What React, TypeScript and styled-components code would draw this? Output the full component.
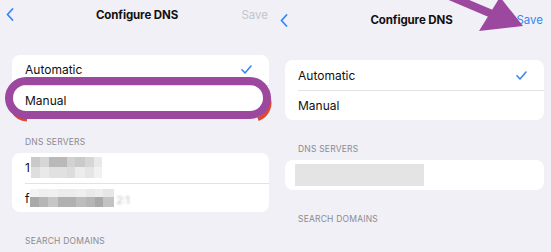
import React from 'react';
import styled, {createGlobalStyle} from 'styled-components';

const Blue = '#3a87f2';
const Purple = '#9d489f';

const GlobalStyle = createGlobalStyle`
    body {
        margin: 0;
        background: #f1f0f6;
        font-family: Inter, "Liberation Sans", Arial, sans-serif;
        -webkit-font-smoothing: antialiased;
    }
`;

const Page = styled.div`
    position: relative;
    display: flex;
    width: 551px;
    height: 252px;
    overflow: hidden;
    background: #f1f0f6;
`;

const Panel = styled.div<{$width: number; $top: number; $left: number}>`
    box-sizing: border-box;
    width: ${p => p.$width}px;
    padding: ${p => p.$top}px 7px 0 ${p => p.$left}px;
    display: flex;
    flex-direction: column;
`;

const NavBar = styled.div<{$pad: number}>`
    height: 30px;
    margin-left: ${p => p.$pad - 6}px;
    margin-right: -6px;
    padding-right: 7px;
    display: grid;
    grid-template-columns: 1fr auto 1fr;
    align-items: center;
`;

const Title = styled.div`
    font-size: 11.5px;
    font-weight: 700;
    color: #111;
    letter-spacing: -0.1px;
`;

const SaveButton = styled.div<{$active?: boolean}>`
    justify-self: end;
    font-size: 11.5px;
    color: ${p => p.$active ? Blue : '#c5c5c8'};
`;

const Card = styled.div<{$mt: number}>`
    margin-top: ${p => p.$mt}px;
    background: #fff;
    border-radius: 8px;
    overflow: hidden;
`;

const Row = styled.div`
    box-sizing: border-box;
    height: 30px;
    margin-left: 13px;
    padding-right: 17px;
    display: flex;
    align-items: center;
    justify-content: space-between;
    font-size: 12px;
    color: #111;

    & + & {
        border-top: 1px solid #e2e2e5;
    }
`;

const Label = styled.div<{$mt: number}>`
    margin: ${p => p.$mt}px 0 6px 13px;
    font-size: 8.5px;
    line-height: 10px;
    letter-spacing: 0.2px;
    color: #8b8b8f;
`;

const Masked = styled.div`
    display: flex;
    align-items: center;
`;

const Mosaic = styled.div`
    display: flex;
    flex-direction: column;
    margin-left: 1px;
`;

const MosaicLine = styled.div<{$h: number}>`
    display: flex;
    height: ${p => p.$h}px;
`;

const Cell = styled.div<{$w: number; $c: string}>`
    width: ${p => p.$w}px;
    background: ${p => p.$c};
`;

const Smudge = styled.span`
    margin: 4px 0 0 2px;
    font-size: 10px;
    color: #b9b9bc;
    filter: blur(0.9px);
`;

const Placeholder = styled.div`
    width: 129px;
    height: 22px;
    margin-left: -3px;
    background: #e4e4e4;
`;

const Overlay = styled.svg`
    position: absolute;
    left: 0;
    top: 0;
    pointer-events: none;
`;

const Chevron = () => (
    <svg width="8" height="13" viewBox="0 0 8 13">
        <path d="M6.5 1 L1.5 6.5 L6.5 12" fill="none" stroke={Blue} strokeWidth="1.8" strokeLinecap="round" strokeLinejoin="round"/>
    </svg>
);

const Check = () => (
    <svg width="11" height="9" viewBox="0 0 11 9">
        <path d="M1 4.8 L4 8 L10 1" fill="none" stroke={Blue} strokeWidth="1.6" strokeLinecap="round" strokeLinejoin="round"/>
    </svg>
);

type Block = {w: number; c: string};

const serverOne: Array<Array<Block>> = [
    [{w: 9, c: '#c9c9c9'}, {w: 9, c: '#d6d6d6'}, {w: 18, c: '#b9b9b9'}, {w: 8, c: '#d2d2d2'}, {w: 10, c: '#cacaca'}, {w: 9, c: '#d6d6d6'}, {w: 8, c: '#e9e9e9'}],
    [{w: 9, c: '#dedede'}, {w: 9, c: '#e9e9e9'}, {w: 18, c: '#e1e1e1'}, {w: 8, c: '#dcdcdc'}, {w: 10, c: '#ececec'}, {w: 9, c: '#e5e5e5'}, {w: 8, c: '#f1f1f1'}],
];

const serverTwo: Array<Array<Block>> = [
    [{w: 9, c: '#f3f3f3'}, {w: 9, c: '#eeeeee'}, {w: 10, c: '#f0f0f0'}, {w: 18, c: '#ececec'}, {w: 10, c: '#efefef'}, {w: 9, c: '#e9e9e9'}, {w: 8, c: '#ededed'}, {w: 11, c: '#e6e6e6'}],
    [{w: 9, c: '#a9a9a9'}, {w: 9, c: '#b6b6b6'}, {w: 10, c: '#c6c6c6'}, {w: 18, c: '#b1b1b1'}, {w: 10, c: '#bdbdbd'}, {w: 9, c: '#b6b6b6'}, {w: 8, c: '#a9a9a9'}, {w: 11, c: '#c3c3c3'}],
];

const renderMosaic = (lines: Array<Array<Block>>, heights: Array<number>) => (
    <Mosaic>
        {lines.map((line, i) =>
            <MosaicLine key={i} $h={heights[i]}>
                {line.map((b, j) => <Cell key={j} $w={b.w} $c={b.c}/>)}
            </MosaicLine>
        )}
    </Mosaic>
);

const App: React.FC = () => {
    return (
        <>
            <GlobalStyle/>
            <Page>
                <Panel $width={276} $top={0} $left={12}>
                    <NavBar $pad={0}>
                        <Chevron/>
                        <Title>Configure DNS</Title>
                        <SaveButton>Save</SaveButton>
                    </NavBar>
                    <Card $mt={25}>
                        <Row>Automatic<Check/></Row>
                        <Row>Manual</Row>
                    </Card>
                    <Label $mt={23}>DNS SERVERS</Label>
                    <Card $mt={0}>
                        <Row>
                            <Masked>1{renderMosaic(serverOne, [10, 11])}</Masked>
                        </Row>
                        <Row>
                            <Masked>f{renderMosaic(serverTwo, [8, 10])}<Smudge>2:1</Smudge></Masked>
                        </Row>
                    </Card>
                    <Label $mt={24}>SEARCH DOMAINS</Label>
                </Panel>
                <Panel $width={275} $top={5} $left={9}>
                    <NavBar $pad={1}>
                        <Chevron/>
                        <Title>Configure DNS</Title>
                        <SaveButton $active>Save</SaveButton>
                    </NavBar>
                    <Card $mt={25}>
                        <Row>Automatic<Check/></Row>
                        <Row>Manual</Row>
                    </Card>
                    <Label $mt={24}>DNS SERVERS</Label>
                    <Card $mt={0}>
                        <Row><Placeholder/></Row>
                    </Card>
                    <Label $mt={24}>SEARCH DOMAINS</Label>
                </Panel>
                <Overlay width="551" height="252" viewBox="0 0 551 252">
                    <path d="M13 111 A17 17 0 0 0 27 119.5" fill="none" stroke="#e0482c" strokeWidth="4"/>
                    <path d="M268 96 A17 17 0 0 1 258 119" fill="none" stroke="#e0482c" strokeWidth="4"/>
                    <rect x="9" y="81" width="258" height="34" rx="17" fill="none" stroke={Purple} strokeWidth="8"/>
                    <line x1="440" y1="-8" x2="492" y2="14" stroke={Purple} strokeWidth="8"/>
                    <polygon points="479,31 500,-3 523,26" fill={Purple}/>
                </Overlay>
            </Page>
        </>
    );
};

export default App;
